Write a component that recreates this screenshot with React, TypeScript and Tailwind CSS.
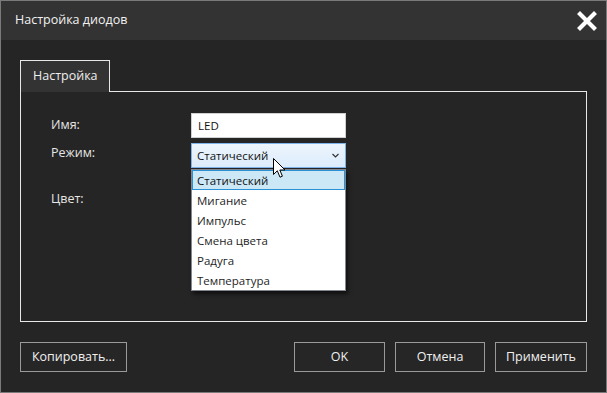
import { useState } from 'react';

const MODES = [
    'Статический',
    'Мигание',
    'Импульс',
    'Смена цвета',
    'Радуга',
    'Температура',
];

function CloseIcon() {
    return (
        <svg width="20" height="20" viewBox="0 0 20 20" className="block">
            <path
                d="M3 3 L17 17 M17 3 L3 17"
                stroke="#ffffff"
                strokeWidth="4.2"
                strokeLinecap="square"
            />
        </svg>
    );
}

function Chevron() {
    return (
        <svg width="7" height="5" viewBox="0 0 7 5" className="block">
            <path d="M0.5 1 L3.5 4 L6.5 1" stroke="#333" strokeWidth="1.2" fill="none" />
        </svg>
    );
}

function Cursor() {
    return (
        <svg width="14" height="21" viewBox="0 0 14 21" className="block">
            <path
                d="M0.5 0.5 L0.5 16.5 L4.3 12.8 L7 19.2 L9.4 18.2 L6.8 12 L12 12 Z"
                fill="#ffffff"
                stroke="#000000"
                strokeWidth="1"
                strokeLinejoin="miter"
            />
        </svg>
    );
}

function DialogButton({ label, className }: { label: string; className?: string }) {
    return (
        <button
            type="button"
            className={`h-[30px] border border-[#9a9a9a] bg-[#262626] text-[12.5px] text-[#f0f0f0] ${className ?? ''}`}
        >
            {label}
        </button>
    );
}

export default function App() {
    const [name] = useState('LED');
    const [mode] = useState(0);

    return (
        <div
            className="relative flex h-[393px] w-[607px] flex-col border border-[#7a7a7a] bg-[#252525] text-[12.5px]"
            style={{ fontFamily: '"Open Sans", "Noto Sans", sans-serif' }}
        >
            {/* title bar */}
            <div className="flex h-[39px] items-center justify-between bg-[#333333] pl-[14px] pr-[9px]">
                <span className="text-[12.5px] text-[#f2f2f2]">Настройка диодов</span>
                <CloseIcon />
            </div>

            <div className="flex flex-1 flex-col px-[19px] pt-[20px]">
                {/* tab */}
                <div className="relative z-10 -mb-px flex h-[32px] w-[90px] items-center border-x border-t border-[#e8e8e8] bg-[#333333] pl-[12px] text-[12.5px] text-[#eeeeee]">
                    Настройка
                </div>

                {/* panel */}
                <div className="h-[231px] border border-[#e8e8e8] pl-[30px] pt-[21px]">
                    <div className="flex flex-col gap-[5px]">
                        <div className="flex items-center">
                            <span className="w-[140px] text-[#e6e6e6]">Имя:</span>
                            <div className="flex h-[25px] w-[155px] items-center border border-[#d0d0d0] bg-white pl-[6px] text-[11.5px] text-[#111]">
                                {name}
                            </div>
                        </div>
                        <div className="flex items-start">
                            <span className="w-[140px] pt-[1px] text-[#e6e6e6]">Режим:</span>
                            <div className="flex h-[25px] w-[155px] items-center justify-between border border-[#7eb4ea] bg-gradient-to-b from-[#ecf4fc] to-[#dcecfc] pl-[5px] pr-[6px] text-[11.5px] text-[#111]">
                                <span>{MODES[mode]}</span>
                                <Chevron />
                            </div>
                        </div>
                        <div className="mt-[17px] flex items-center">
                            <span className="w-[140px] text-[#e6e6e6]">Цвет:</span>
                        </div>
                    </div>
                </div>

                {/* buttons */}
                <div className="mt-[20px] flex items-center">
                    <DialogButton label="Копировать..." className="w-[107px]" />
                    <div className="flex-1" />
                    <div className="flex gap-[10px]">
                        <DialogButton label="OK" className="w-[91px]" />
                        <DialogButton label="Отмена" className="w-[90px]" />
                        <DialogButton label="Применить" className="w-[92px]" />
                    </div>
                </div>
            </div>

            {/* open dropdown list */}
            <div className="absolute left-[190px] top-[168px] w-[155px] border border-[#828790] bg-white text-[11.5px] shadow-[2px_3px_4px_rgba(0,0,0,0.6)]">
                {MODES.map((m, i) => (
                    <div
                        key={m}
                        className={
                            i === mode
                                ? 'flex h-[20px] items-center border border-[#2b91d6] bg-[#cce8f7] pl-[4px] pt-[2px] text-[#111]'
                                : 'flex h-[20px] items-center pl-[5px] pt-[2px] text-[#1e1e1e]'
                        }
                    >
                        {m}
                    </div>
                ))}
            </div>

            <div className="pointer-events-none absolute left-[272px] top-[157px]">
                <Cursor />
            </div>
        </div>
    );
}
